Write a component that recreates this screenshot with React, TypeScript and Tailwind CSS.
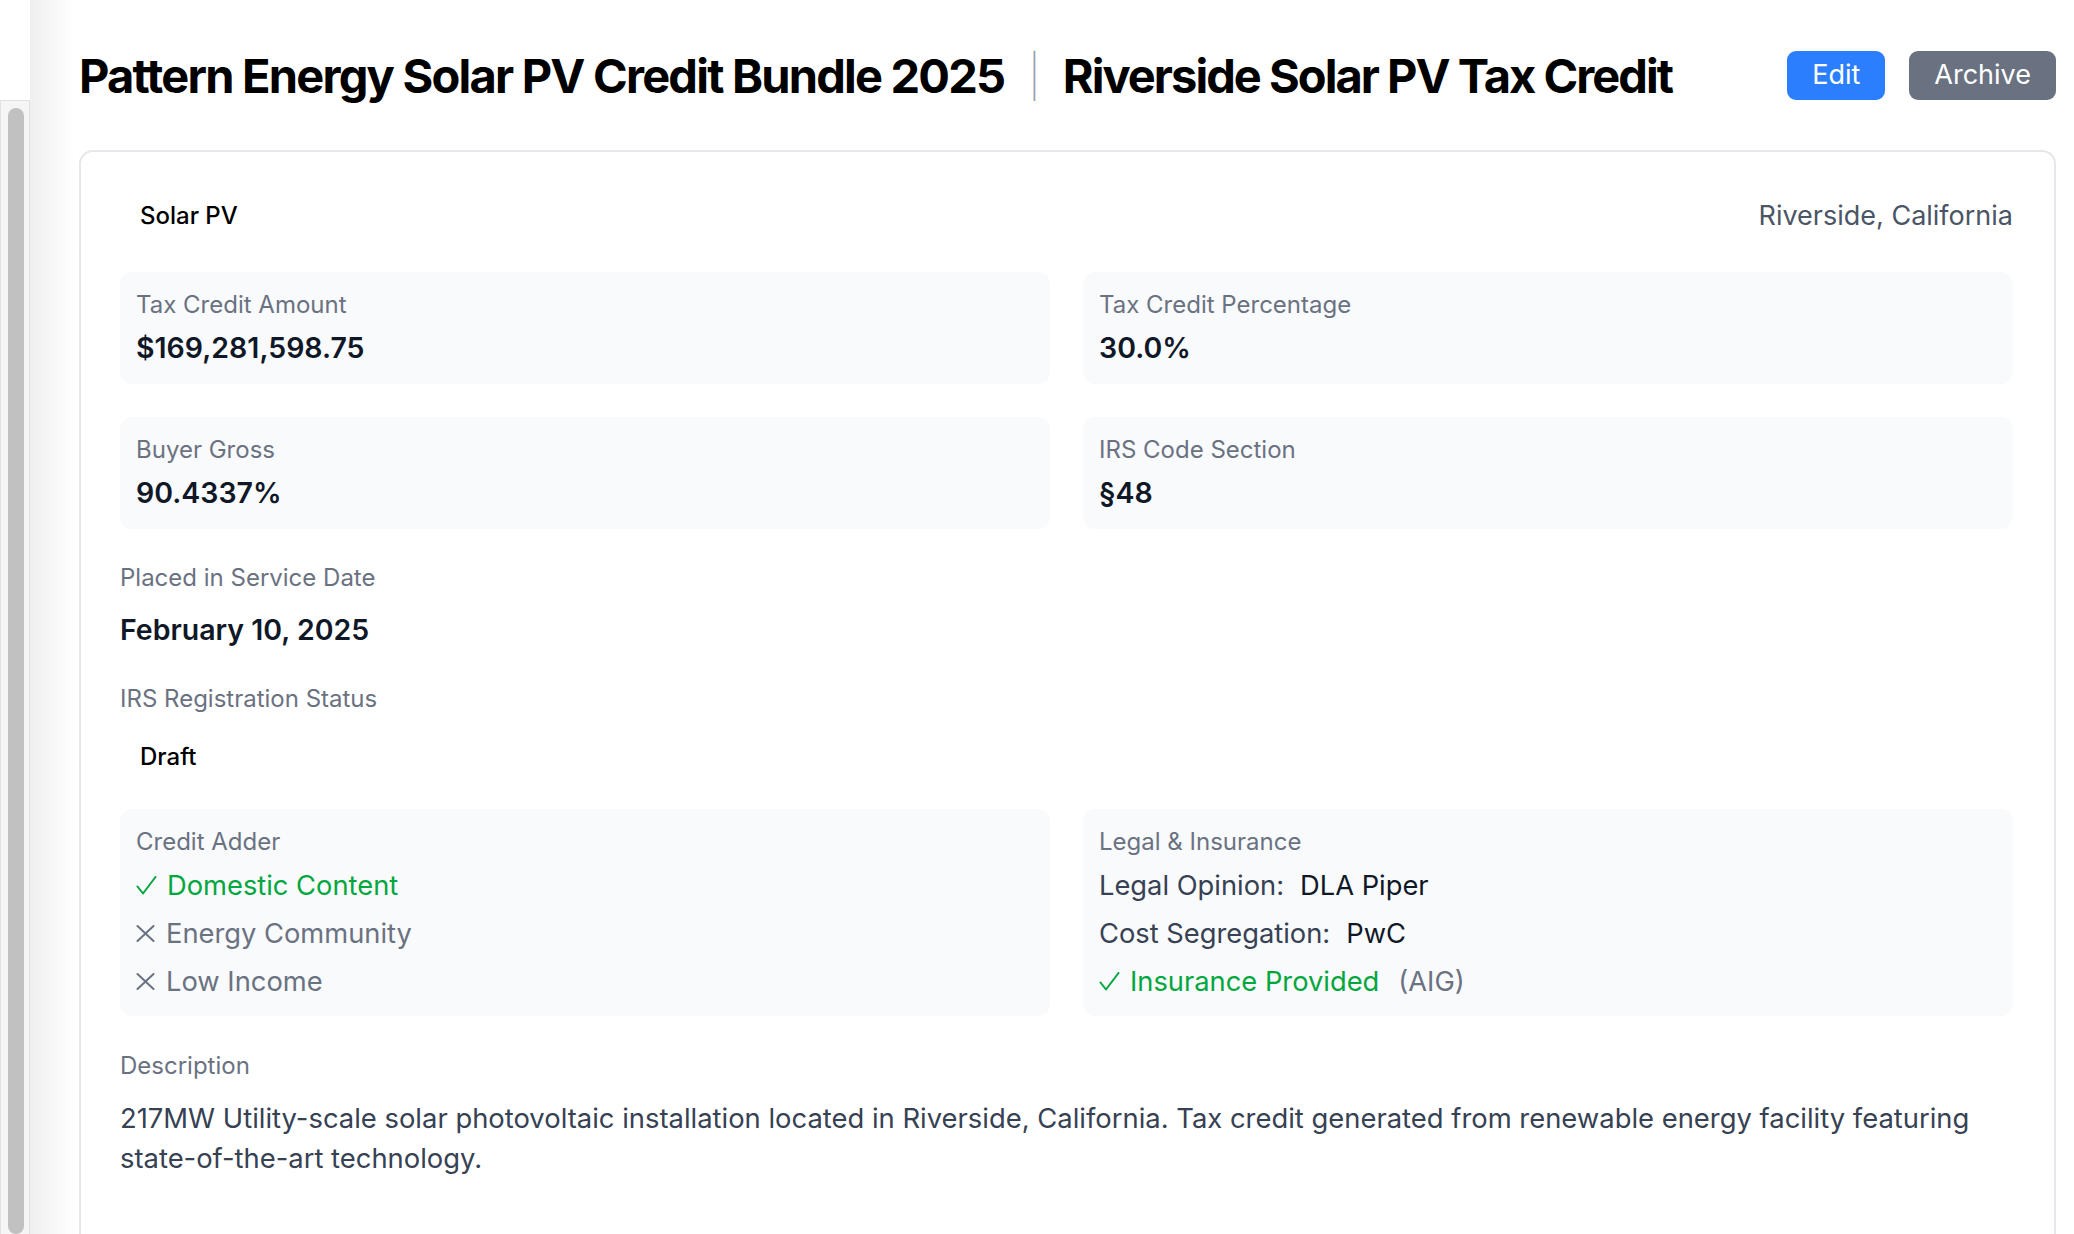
import { ReactNode } from 'react';

function Box({ label, children, pb = 'pb-[16px]' }: { label: string; children: ReactNode; pb?: string }) {
  return (
    <div className={`bg-gray-50 rounded-[12px] px-[16px] pt-[17px] ${pb}`}>
      <p className="text-[24px] leading-[32px] text-gray-500">{label}</p>
      {children}
    </div>
  );
}

function Stat({ label, value }: { label: string; value: string }) {
  return (
    <Box label={label} pb="pb-[18px]">
      <p className="mt-[8px] text-[28.5px] leading-[37px] font-semibold text-gray-900">{value}</p>
    </Box>
  );
}

function Check() {
  return (
    <svg width="21" height="19" viewBox="0 0 21 19" fill="none" className="mr-[10px] shrink-0">
      <path d="M1.5 10.5 L7 17.5 L19.5 1" stroke="currentColor" strokeWidth="2" strokeLinecap="round" strokeLinejoin="round" />
    </svg>
  );
}

function Cross() {
  return (
    <svg width="19" height="17" viewBox="0 0 19 17" fill="none" className="mr-[11px] shrink-0">
      <path d="M1.5 1 L17.5 16 M17.5 1 L1.5 16" stroke="currentColor" strokeWidth="2" strokeLinecap="round" />
    </svg>
  );
}

function Item({ ok, children }: { ok: boolean; children: ReactNode }) {
  return (
    <div className={`flex items-center text-[27.3px] leading-[37px] ${ok ? 'text-green-600' : 'text-gray-500'}`}>
      {ok ? <Check /> : <Cross />}
      <span>{children}</span>
    </div>
  );
}

export default function App() {
  return (
    <div className="flex h-[1234px] overflow-hidden bg-white font-['Inter',sans-serif]">
      {/* collapsed side panel */}
      <div className="w-[30px] shrink-0 pt-[100px]">
        <div className="h-full bg-[#f5f5f5] border-t border-r border-l border-[#e2e2e2] pt-[7px] px-[7px]">
          <div className="h-full w-[16px] rounded-full bg-[#c1c1c1]" />
        </div>
      </div>

      <main className="flex-1 pl-[49px] pr-[18px] pt-[49px] bg-[linear-gradient(to_right,#efefef,#ffffff_44px)]">
        <header className="flex items-center justify-between h-[53px]">
          <h1 className="flex items-center text-[47px] leading-[53px] font-bold text-black tracking-[-0.038em]">
            <span>Pattern Energy Solar PV Credit Bundle 2025</span>
            <span className="mx-[24px] font-extralight text-gray-400 text-[42px]">|</span>
            <span className="tracking-[-0.042em]">Riverside Solar PV Tax Credit</span>
          </h1>
          <div className="flex items-center gap-[24px]">
            <button className="h-[49px] px-[25px] rounded-[9px] bg-blue-500 text-white text-[27px]">Edit</button>
            <button className="h-[49px] px-[25px] rounded-[9px] bg-gray-500 text-white text-[27px]">Archive</button>
          </div>
        </header>

        <section className="mt-[48px] border-2 border-[#e5e7eb] rounded-[14px] pl-[39px] pr-[41px] pt-[39px] pb-[200px]">
          <div className="flex items-center justify-between h-[50px]">
            <span className="px-[20px] text-[24px] font-medium text-black">Solar PV</span>
            <span className="text-[27px] text-gray-600">Riverside, California</span>
          </div>

          <div className="mt-[31px] grid grid-cols-2 gap-[33px]">
            <Stat label="Tax Credit Amount" value="$169,281,598.75" />
            <Stat label="Tax Credit Percentage" value="30.0%" />
            <Stat label="Buyer Gross" value="90.4337%" />
            <Stat label="IRS Code Section" value="§48" />
          </div>

          <p className="mt-[33px] text-[24px] leading-[32px] text-gray-500">Placed in Service Date</p>
          <p className="mt-[17px] text-[28.5px] leading-[37px] font-semibold text-gray-900">February 10, 2025</p>

          <p className="mt-[35px] text-[24px] leading-[32px] text-gray-500">IRS Registration Status</p>
          <div className="mt-[17px] h-[50px] flex items-center">
            <span className="px-[20px] text-[24px] font-medium text-black">Draft</span>
          </div>

          <div className="mt-[27px] grid grid-cols-2 gap-[33px]">
            <Box label="Credit Adder">
              <div className="mt-[9px] flex flex-col gap-[11px]">
                <Item ok>Domestic Content</Item>
                <Item ok={false}>Energy Community</Item>
                <Item ok={false}>Low Income</Item>
              </div>
            </Box>
            <Box label="Legal & Insurance">
              <div className="mt-[9px] flex flex-col gap-[11px] text-[27.3px] leading-[37px]">
                <p>
                  <span className="text-gray-700">Legal Opinion:</span>
                  <span className="ml-[16px] text-gray-900">DLA Piper</span>
                </p>
                <p>
                  <span className="text-gray-700">Cost Segregation:</span>
                  <span className="ml-[16px] text-gray-900">PwC</span>
                </p>
                <div className="flex items-center">
                  <span className="flex items-center text-green-600">
                    <Check />
                    Insurance Provided
                  </span>
                  <span className="ml-[19px] text-gray-500">(AIG)</span>
                </div>
              </div>
            </Box>
          </div>

          <p className="mt-[34px] text-[24px] leading-[32px] text-gray-500">Description</p>
          <p className="mt-[16px] text-[27.4px] leading-[40px] text-gray-700">
            217MW Utility-scale solar photovoltaic installation located in Riverside, California. Tax credit generated from renewable energy facility featuring{' '}
            <span className="whitespace-nowrap">state-of-the-art</span> technology.
          </p>
        </section>
      </main>
    </div>
  );
}
